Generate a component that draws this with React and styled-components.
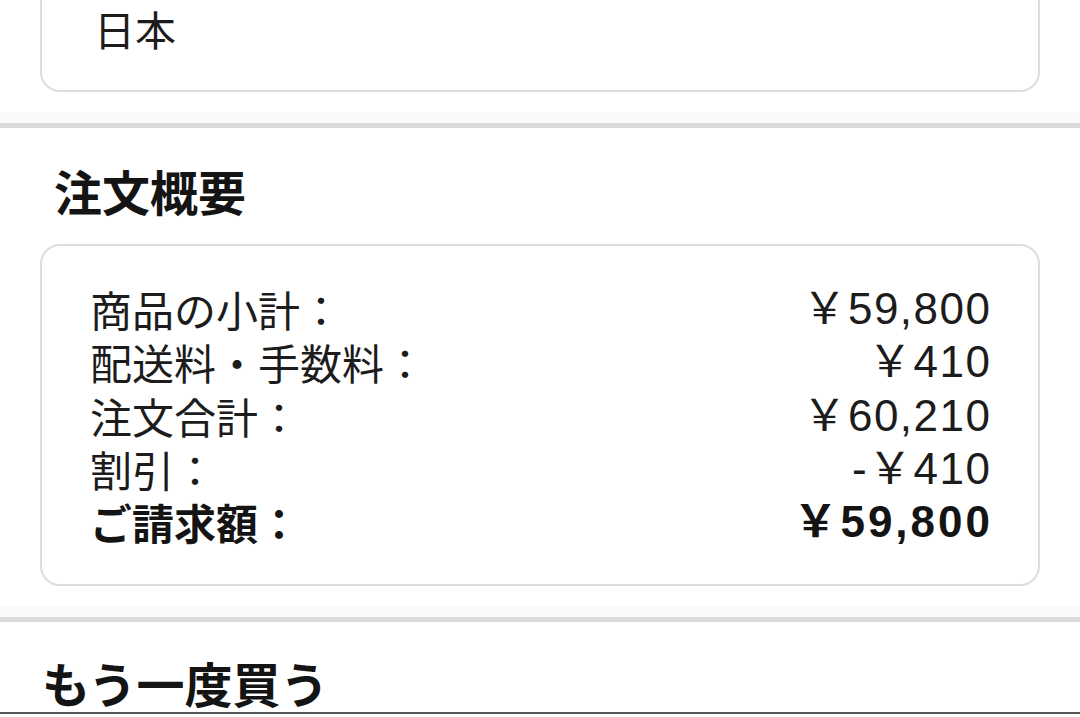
import React from "react";
import styled, { createGlobalStyle } from "styled-components";

const GlobalStyle = createGlobalStyle`
  html, body {
    margin: 0;
    padding: 0;
    background: #ffffff;
  }
  body {
    font-family: "Noto Sans CJK JP", "Noto Sans", sans-serif;
    color: #1c1c1c;
    -webkit-font-smoothing: antialiased;
  }
`;

const Page = styled.div`
  width: 1080px;
  height: 717px;
  overflow: hidden;
  display: flex;
  flex-direction: column;
  background: #ffffff;
`;

const Section = styled.section`
  display: flex;
  flex-direction: column;
  gap: ${(p) => p.$gap || 0}px;
  padding: ${(p) => p.$pad || "0 40px 20px"};
`;

const Card = styled.div`
  border: 2px solid #dcdcdc;
  border-radius: 20px;
  padding: 36px 48px;
  display: flex;
  flex-direction: column;
  background: #ffffff;

  ${(p) =>
    p.$openTop &&
    `
    border-top: none;
    border-radius: 0 0 20px 20px;
    padding-top: 2px;
    padding-bottom: 35px;
  `}
`;

const AddressLine = styled.div`
  font-size: 41px;
  line-height: 53px;
  padding-left: 4px;
  color: #1c1c1c;
`;

const Divider = styled.div`
  height: 11px;
  background: #fafafa;
  border-bottom: 5px solid #dadada;
`;

const Heading = styled.h2`
  margin: 0;
  padding: 0 0 0 ${(p) => p.$indent}px;
  font-size: 48px;
  line-height: 60px;
  font-weight: 700;
  color: #141414;
`;

const SummaryList = styled.div`
  display: flex;
  flex-direction: column;
`;

const Row = styled.div`
  display: flex;
  justify-content: space-between;
  align-items: center;
  height: 53.3px;
  line-height: 53px;
  font-weight: ${(p) => (p.$strong ? 700 : 400)};
  color: ${(p) => (p.$strong ? "#141414" : "#1c1c1c")};
`;

const Label = styled.span`
  white-space: nowrap;
  font-size: 42px;
  line-height: 53px;
`;

/* Latin digits with a wide, Helvetica-like shape; the full-width yen sign
   falls through to the CJK face. */
const Amount = styled.span`
  white-space: nowrap;
  font-family: "Liberation Sans", "Noto Sans CJK JP", sans-serif;
  font-size: 44px;
  line-height: 53px;
  letter-spacing: ${(p) => (p.$strong ? 3 : 1.5)}px;
  margin-right: ${(p) => (p.$strong ? -3 : -1.5)}px;
`;

const NextBlock = styled.div`
  flex: 1;
  border-top: 2px solid #555555;
`;

const summary = [
  { label: "商品の小計：", value: "￥59,800" },
  { label: "配送料・手数料：", value: "￥410" },
  { label: "注文合計：", value: "￥60,210" },
  { label: "割引：", value: "-￥410" },
  { label: "ご請求額：", value: "￥59,800", strong: true },
];

export default function App() {
  return (
    <>
      <GlobalStyle />
      <Page>
        <Section $pad="0 40px 20px">
          <Card $openTop>
            <AddressLine>日本</AddressLine>
          </Card>
        </Section>
        <Divider />

        <Section $pad="32px 40px 20px" $gap={24}>
          <Heading $indent={14}>注文概要</Heading>
          <Card>
            <SummaryList>
              {summary.map((r) => (
                <Row key={r.label} $strong={r.strong}>
                  <Label>{r.label}</Label>
                  <Amount $strong={r.strong}>{r.value}</Amount>
                </Row>
              ))}
            </SummaryList>
          </Card>
        </Section>
        <Divider />

        <Section $pad="30px 40px 0">
          <Heading $indent={2}>もう一度買う</Heading>
        </Section>
        <NextBlock />
      </Page>
    </>
  );
}
